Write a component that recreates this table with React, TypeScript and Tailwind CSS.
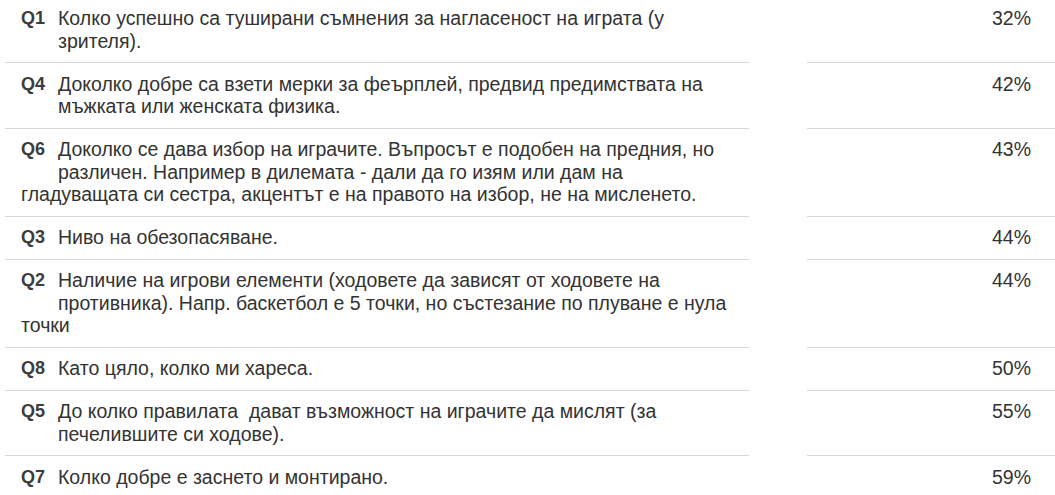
const rows = [
  { q: "Q1", text: "Колко успешно са туширани съмнения за нагласеност на играта (у зрителя).", pct: "32%" },
  { q: "Q4", text: "Доколко добре са взети мерки за феърплей, предвид предимствата на мъжката или женската физика.", pct: "42%" },
  {
    q: "Q6",
    text: "Доколко се дава избор на играчите. Въпросът е подобен на предния, но различен. Например в дилемата - дали да го изям или дам на гладуващата си сестра, акцентът е на правото на избор, не на мисленето.",
    pct: "43%",
  },
  { q: "Q3", text: "Ниво на обезопасяване.", pct: "44%", short: true },
  {
    q: "Q2",
    text: "Наличие на игрови елементи (ходовете да зависят от ходовете на противника). Напр. баскетбол е 5 точки, но състезание по плуване е нула точки",
    pct: "44%",
  },
  { q: "Q8", text: "Като цяло, колко ми хареса.", pct: "50%", short: true },
  { q: "Q5", text: "До колко правилата\u00a0 дават възможност на играчите да мислят (за печелившите си ходове).", pct: "55%" },
  { q: "Q7", text: "Колко добре е заснето и монтирано.", pct: "59%", short: true },
];

export default function App() {
  return (
    <div className="min-h-screen bg-white overflow-hidden font-['Liberation_Sans',Arial,sans-serif] text-[#333]">
      <div className="-mt-[2.5px] pl-[5px] grid grid-cols-[744px_58px_248px]">
        {rows.map((r, i) => (
          <div key={r.q} className="contents">
            <div
              className={`py-[9.75px] pl-4 pr-4 text-[19.5px] leading-[22.5px] ${
                i < rows.length - 1 ? "border-b border-[#d6d6d6]" : ""
              }`}
            >
              <span
                className={`float-left w-[37px] text-[18px] font-bold font-['Liberation_Sans_Narrow','Arial_Narrow','Liberation_Sans',sans-serif] text-[#3d3d3d] ${
                  r.short ? "h-[22px]" : "h-[45px]"
                }`}
              >
                {r.q}
              </span>
              {r.text}
            </div>
            <div />
            <div
              className={`py-[9.75px] pr-6 text-right text-[19.5px] leading-[22.5px] ${
                i < rows.length - 1 ? "border-b border-[#d6d6d6]" : ""
              }`}
            >
              {r.pct}
            </div>
          </div>
        ))}
      </div>
    </div>
  );
}
